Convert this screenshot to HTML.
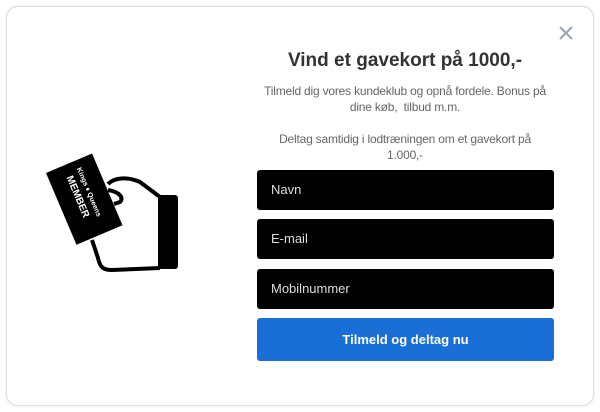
<!DOCTYPE html>
<html><head><meta charset="utf-8"><style>
body{margin:0;width:600px;height:412px;background:#fff;position:relative;overflow:hidden;font-family:"Liberation Sans",sans-serif}
.card{position:absolute;left:6px;top:6px;width:586px;height:398px;border:1px solid #ddd;border-radius:12px;box-shadow:0 0 3px rgba(0,0,0,.1)}
.t{position:absolute;left:235px;width:340px;text-align:center}
h1{margin:0;font-size:19px;font-weight:bold;color:#333;top:50px}
.p{font-size:12px;color:#666;line-height:16px;letter-spacing:-0.2px}
.in{position:absolute;left:257px;width:297px;height:40px;background:#000;border-radius:3px;color:#ddd;font-size:13px;line-height:40px;box-sizing:border-box;padding-left:14px}
.btn{position:absolute;left:257px;top:318px;width:297px;height:43px;background:#1a6fd6;border-radius:3px;color:#fff;font-weight:bold;font-size:13px;text-align:center;line-height:43px}
</style></head><body>
<div class="card"></div>
<svg style="position:absolute;left:558px;top:25px" width="16" height="16"><path d="M2 2L14 14M14 2L2 14" stroke="#9aa4b4" stroke-width="2"/></svg>
<h1 class="t">Vind et gavekort på 1000,-</h1>
<div class="t p" style="top:83px">Tilmeld dig vores kundeklub og opnå fordele. Bonus på<br>dine køb,&nbsp; tilbud m.m.</div>
<div class="t p" style="top:131px">Deltag samtidig i lodtræningen om et gavekort på<br>1.000,-</div>
<div class="in" style="top:170px">Navn</div>
<div class="in" style="top:219px">E-mail</div>
<div class="in" style="top:269px">Mobilnummer</div>
<div class="btn">Tilmeld og deltag nu</div>
<svg style="position:absolute;left:30px;top:140px" width="170" height="150">
<path d="M78 44 C84 38 96 36 110 42 L130 57" fill="none" stroke="#000" stroke-width="4"/>
<path d="M62 100 L68 118 C70 128 74 130 82 130 L130 128" fill="none" stroke="#000" stroke-width="4"/>
<path d="M78 50 C90 52 94 58 90 62 L84 64" fill="none" stroke="#000" stroke-width="4"/>
<rect x="128" y="55" width="20" height="74" rx="3" fill="#000"/>
<g transform="translate(16,33) rotate(-23)">
<rect x="0" y="0" width="50" height="78" fill="#000"/>
<text x="0" y="0" transform="translate(30,8) rotate(90)" fill="#fff" font-size="7" font-weight="bold">Kings ♦ Queens</text>
<text x="0" y="0" transform="translate(17,12) rotate(90)" fill="#fff" font-size="10" font-weight="bold">MEMBER</text>
</g>
</svg>
</body></html>
